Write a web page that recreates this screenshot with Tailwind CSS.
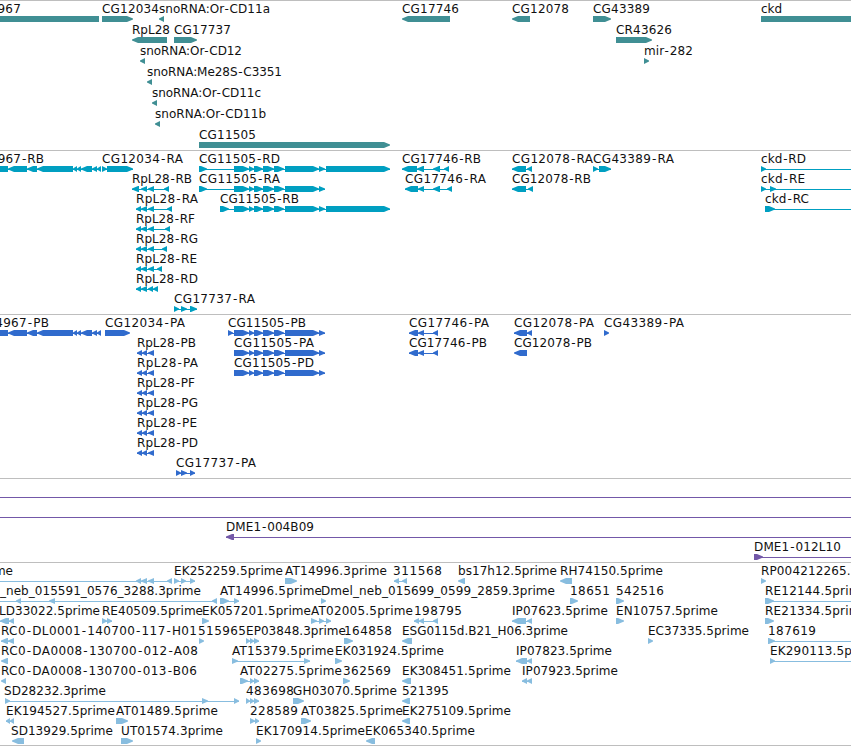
<!DOCTYPE html>
<html lang="en">
<head>
    <meta charset="UTF-8">
    <meta name="viewport" content="width=device-width, initial-scale=1.0">
    <title>Genome Browser</title>
    <script src="https://cdn.jsdelivr.net/npm/@tailwindcss/browser@4"></script>
</head>
<body class="bg-white text-black overflow-hidden">
    <main class="flex flex-col w-[851px] h-[746px] overflow-hidden font-['DejaVu_Sans',sans-serif] text-[12px]">
        <section class="h-[150px] border-t border-[#bebebe] text-[#408f94]"><svg id="genes" class="block w-full h-full"></svg></section>
        <section class="h-[164px] border-t border-[#bebebe] text-[#009fc1]"><svg id="transcripts" class="block w-full h-full"></svg></section>
        <section class="h-[164px] border-t border-[#bebebe] text-[#306bcd]"><svg id="proteins" class="block w-full h-full"></svg></section>
        <section class="h-[84px] border-t border-[#bebebe] text-[#7358a8]"><svg id="clones" class="block w-full h-full"></svg></section>
        <section class="h-[184px] border-y border-[#bebebe] text-[#88bddf]"><svg id="ests" class="block w-full h-full"></svg></section>
    </main>

    <script>
        const L = -1, R = 1;
        const END = 860;

        // exon blocks shared by several transcripts
        const cg14967 = [[-36,8],[8,27],[27,37],[37,73],[73,77],[77,81],[81,92],[92,97],[97,101]];
        const cg11505 = [[234,249],[249,254],[254,263],[263,274],[274,284],[285,319],[319,325]];
        const rpl28 = [[136,141],[141,147],[148,154]];
        const rpl28p = [[137,142],[142,147],[148,154]];

        // [row, label, label start, label end, strand, exons, line end]
        const genes = [
            [0, 'CG14967', -37, 21, L, [[-36,99]]],
            [0, 'CG12034', 102, 159, R, [[102,133]]],
            [0, 'snoRNA:Or-CD11a', 159, 270, L, [[159,164]]],
            [0, 'CG17746', 402, 459, L, [[402,450]]],
            [0, 'CG12078', 512, 569, L, [[512,530]]],
            [0, 'CG43389', 593, 650, R, [[593,611]]],
            [0, 'ckd', 761, 782, R, [[761,END]]],
            [1, 'RpL28', 132, 170, L, [[132,167]]],
            [1, 'CG17737', 174, 231, R, [[174,197]]],
            [1, 'CR43626', 616, 672, R, [[616,652]]],
            [2, 'snoRNA:Or-CD12', 140, 242, L, [[140,145]]],
            [2, 'mir-282', 644, 693, R, [[644,649]]],
            [3, 'snoRNA:Me28S-C3351', 147, 282, L, [[147,152]]],
            [4, 'snoRNA:Or-CD11c', 152, 261, L, [[152,157]]],
            [5, 'snoRNA:Or-CD11b', 155, 266, L, [[155,160]]],
            [6, 'CG11505', 199, 256, R, [[199,390]]]
        ];

        const transcripts = [
            [0, 'CG14967-RB', -36, 44, L, cg14967],
            [0, 'CG12034-RA', 102, 183, R, [[102,107],[107,133]]],
            [0, 'CG11505-RD', 199, 280, R, [[199,207], ...cg11505, [326,390]]],
            [0, 'CG17746-RB', 402, 481, L, [[402,417],[417,424],[433,440],[444,449]]],
            [0, 'CG12078-RA', 512, 593, L, [[512,526],[527,532]]],
            [0, 'CG43389-RA', 593, 674, R, [[593,598],[599,611]]],
            [0, 'ckd-RD', 761, 806, R, [[761,766]], END],
            [1, 'RpL28-RB', 132, 192, L, [[132,139],[141,147],[148,154],[164,169]]],
            [1, 'CG11505-RA', 199, 280, R, [[199,207], ...cg11505]],
            [1, 'CG17746-RA', 405, 486, L, [[405,418],[418,424],[433,440],[447,452]]],
            [1, 'CG12078-RB', 512, 591, L, [[512,526],[528,533]]],
            [1, 'ckd-RE', 761, 805, R, [[761,766],[770,776]], END],
            [2, 'RpL28-RA', 136, 198, L, [...rpl28, [167,172]]],
            [2, 'CG11505-RB', 220, 299, R, [[220,229], ...cg11505, [326,390]]],
            [2, 'ckd-RC', 765, 809, R, [[765,775]], END],
            [3, 'RpL28-RF', 136, 195, L, [...rpl28, [165,170]]],
            [4, 'RpL28-RG', 136, 198, L, [...rpl28, [162,167]]],
            [5, 'RpL28-RE', 136, 197, L, [...rpl28, [157,162]]],
            [6, 'RpL28-RD', 136, 198, L, [[136,141],[141,147],[148,153],[153,158]]],
            [7, 'CG17737-RA', 174, 255, R, [[174,179],[181,187],[190,197]]]
        ];

        const proteins = [
            [0, 'CG14967-PB', -31, 49, L, cg14967],
            [0, 'CG12034-PA', 105, 185, R, [[105,130]]],
            [0, 'CG11505-PB', 228, 306, R, [[228,233], ...cg11505]],
            [0, 'CG17746-PA', 409, 489, L, [[409,418],[418,424],[433,438]]],
            [0, 'CG12078-PA', 514, 594, L, [[514,527],[527,532]]],
            [0, 'CG43389-PA', 604, 684, R, [[604,609]]],
            [1, 'RpL28-PB', 137, 196, L, rpl28p],
            [1, 'CG11505-PA', 234, 314, R, cg11505],
            [1, 'CG17746-PB', 409, 487, L, [[409,418],[418,424],[433,438]]],
            [1, 'CG12078-PB', 514, 592, L, [[514,527]]],
            [2, 'RpL28-PA', 137, 198, L, rpl28p],
            [2, 'CG11505-PD', 234, 314, R, cg11505],
            [3, 'RpL28-PF', 137, 195, L, rpl28p],
            [4, 'RpL28-PG', 137, 198, L, rpl28p],
            [5, 'RpL28-PE', 137, 197, L, rpl28p],
            [6, 'RpL28-PD', 137, 198, L, rpl28p],
            [7, 'CG17737-PA', 176, 256, R, [[176,181],[181,187],[190,195]]]
        ];

        const clones = [
            [0, '', 0, 0, R, [[-20,-10]], END],
            [1, '', 0, 0, R, [[-20,-10]], END],
            [2, 'DME1-004B09', 226, 314, L, [[226,234]], END],
            [3, 'DME1-012L10', 754, 841, R, [[754,763]], END]
        ];

        const ests = [
            [0, 'prime', -22, 13, L, [[-20,-10],[136,141],[141,147],[148,154],[167,172]]],
            [0, 'EK252259.5prime', 174, 283, R, [[174,179],[181,186],[190,195]]],
            [0, 'AT14996.3prime', 285, 387, R, [[285,297]]],
            [0, '311568', 393, 442, L, [[394,399],[402,407]]],
            [0, 'bs17h12.5prime', 458, 557, L, [[458,465]]],
            [0, 'RH74150.5prime', 560, 663, L, [[560,572]]],
            [0, 'RP004212265.5prime', 761, 894, R, [[761,766]]],
            [1, '_neb_015591_0576_3288.3prime', 0, 201, L, [[-20,-10],[16,21],[49,55],[212,217]]],
            [1, 'AT14996.5prime', 220, 322, R, [[220,229],[234,239]]],
            [1, 'Dmel_neb_015699_0599_2859.3prime', 321, 555, R, [[321,326]]],
            [1, '18651', 570, 610, R, [[570,578]]],
            [1, '542516', 616, 664, R, [[616,624]]],
            [1, 'RE12144.5prime', 765, 868, R, [[765,774]], END],
            [2, 'LD33022.5prime', -1, 100, L, [[0,9],[9,14]]],
            [2, 'RE40509.5prime', 102, 203, R, [[102,107],[107,112]]],
            [2, 'EK057201.5prime', 202, 311, R, [[202,209]]],
            [2, 'AT02005.5prime', 311, 413, R, [[311,317],[319,324],[326,331]]],
            [2, '198795', 414, 462, L, [[414,419],[419,424],[433,438]]],
            [2, 'IP07623.5prime', 512, 608, L, [[512,526],[527,532]]],
            [2, 'EN10757.5prime', 616, 718, R, [[616,624]]],
            [2, 'RE21334.5prime', 765, 868, R, [[765,774]]],
            [3, 'RC0-DL0001-140700-117-H01', 1, 197, L, [[1,8],[8,14]]],
            [3, '515965', 198, 246, R, [[199,204]]],
            [3, 'EP03848.3prime', 246, 346, R, [[246,250],[250,254],[254,259]]],
            [3, '164858', 344, 392, R, [[344,353]]],
            [3, 'ESG0115d.B21_H06.3prime', 402, 568, L, [[402,412]]],
            [3, 'EC37335.5prime', 648, 749, R, [[648,653]]],
            [3, '187619', 768, 816, R, [[768,775]], END],
            [4, 'RC0-DA0008-130700-012-A08', 1, 198, L, [[1,8]]],
            [4, 'AT15379.5prime', 232, 334, R, [[232,238],[304,310]]],
            [4, 'EK031924.5prime', 335, 444, R, [[335,342]]],
            [4, 'IP07823.5prime', 516, 612, L, [[516,527],[527,532]]],
            [4, 'EK290113.5prime', 770, 880, R, [[770,775]], END],
            [5, 'RC0-DA0008-130700-013-B06', 1, 197, L, [[1,6]]],
            [5, 'AT02275.5prime', 240, 342, R, [[240,248],[250,254],[254,259]]],
            [5, '362569', 343, 391, R, [[343,350]]],
            [5, 'EK308451.5prime', 402, 511, L, [[402,411]]],
            [5, 'IP07923.5prime', 522, 618, L, [[522,527],[527,532]]],
            [6, 'SD28232.3prime', 4, 106, R, [[5,10],[202,208],[234,239]]],
            [6, '483698', 246, 294, R, [[246,250],[250,254],[254,259]]],
            [6, 'GH03070.5prime', 293, 397, R, [[293,304]]],
            [6, '521395', 402, 449, L, [[402,410]]],
            [7, 'EK194527.5prime', 6, 115, L, [[6,10],[10,14]]],
            [7, 'AT01489.5prime', 116, 218, R, [[116,128]]],
            [7, '228589', 250, 298, R, [[250,255],[255,259]]],
            [7, 'AT03825.5prime', 301, 403, R, [[301,311]]],
            [7, 'EK275109.5prime', 402, 511, L, [[402,410]]],
            [8, 'SD13929.5prime', 11, 113, L, [[12,24]]],
            [8, 'UT01574.3prime', 121, 223, R, [[121,133]]],
            [8, 'EK170914.5prime', 256, 365, R, [[256,261]]],
            [8, 'EK065340.5prime', 365, 475, L, [[366,375]]]
        ];

        // a block with a pointed end; short blocks are plain triangles
        function exon(a, b, y, strand) {
            const head = Math.min(6, b - a);
            const tip = strand === R ? b : a;
            const base = strand === R ? a : b;
            const neck = tip - strand * head;
            return `<polygon points="${base},${y} ${neck},${y} ${tip},${y + 2.5} ${tip},${y + 3.5} ${neck},${y + 6} ${base},${y + 6}" />`;
        }

        // leave a little air on both sides of each hyphen
        function spaced(label) {
            return label.replace(/-(.)/g, '<tspan dx="0.8">-</tspan><tspan dx="0.8">$1</tspan>');
        }

        function drawTrack(id, features, pitch) {
            document.getElementById(id).innerHTML = features.map(([row, label, x, end, strand, exons, lineEnd]) => {
                const y = row * pitch + 15;
                const from = exons[0][0];
                const to = lineEnd || exons[exons.length - 1][1];
                return `
                    <g fill="currentColor">
                        ${exons.length > 1 || lineEnd ? `<rect x="${from}" y="${y + 3}" width="${to - from}" height="1" />` : ''}
                        ${exons.map(([a, b]) => exon(a, b, y, strand)).join('')}
                    </g>
                    ${label ? `<text x="${x}" y="${y - 3}" textLength="${end - x}" fill="#111">${spaced(label)}</text>` : ''}`;
            }).join('');
        }

        drawTrack('genes', genes, 21);
        drawTrack('transcripts', transcripts, 20);
        drawTrack('proteins', proteins, 20);
        drawTrack('clones', clones, 20);
        drawTrack('ests', ests, 20);
    </script>
</body>
</html>
